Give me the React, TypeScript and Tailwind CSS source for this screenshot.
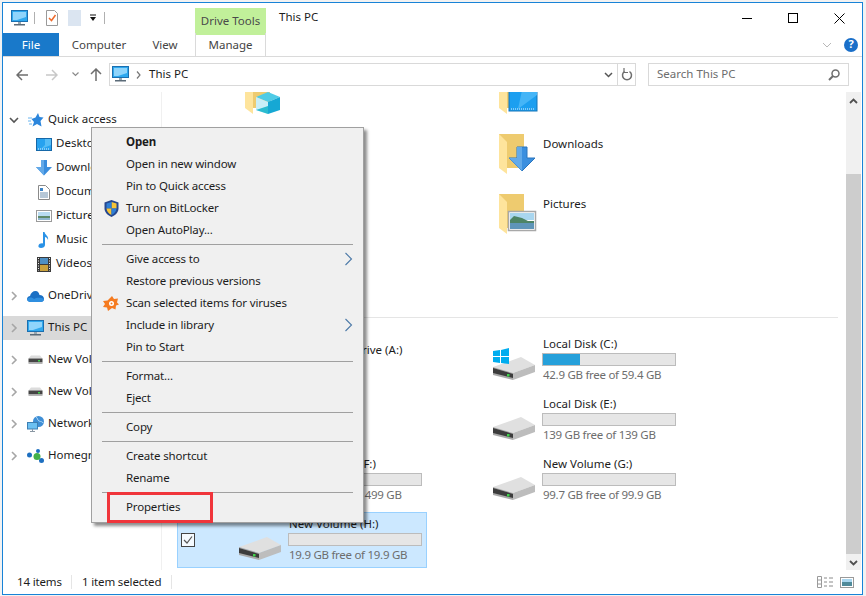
import type { ReactNode } from "react";

function Pc({ w = 17, h = 16 }: { w?: number; h?: number }) {
  return (
    <svg width={w} height={h} viewBox="0 0 17 16" className="shrink-0">
      <rect x="0.500" y="0.500" width="16" height="11" fill="#2fa8ee" stroke="#1b6fb0" />
      <polygon points="2,2 15,2 15,7 6,10 2,10" fill="#8fd4fb" />
      <rect x="7" y="12" width="3" height="2" fill="#9aa7b0" />
      <rect x="3" y="14" width="11" height="1.500" fill="#5b6b78" />
    </svg>
  );
}

function Chevron({ open = false }: { open?: boolean }) {
  return (
    <svg width="10" height="10" viewBox="0 0 10 10" className="shrink-0">
      {open ? (
        <path d="M1 3l4 4 4-4" fill="none" stroke="#555" strokeWidth="1.600" />
      ) : (
        <path d="M3 1l4 4-4 4" fill="none" stroke="#a6a6a6" strokeWidth="1.600" />
      )}
    </svg>
  );
}

function SmallDrive() {
  return (
    <svg width="15" height="10" viewBox="0 0 15 10" className="shrink-0">
      <polygon points="0.500,3.500 3,0.500 12,0.500 14.500,3.500" fill="#dcdcdc" />
      <rect x="0.500" y="3.500" width="14" height="4" fill="#454545" />
      <rect x="10" y="5" width="2" height="1.500" fill="#3fd24a" />
      <rect x="0.500" y="7.500" width="14" height="1.500" fill="#b5b5b5" />
    </svg>
  );
}

const navIcons: Record<string, ReactNode> = {
  star: (
    <svg width="16" height="16" viewBox="0 0 16 16">
      <polygon points="10,1 11.500,5 15.500,5.500 12.500,9 13.500,14.500 9,12 4.500,14.500 6,10 3.500,7 7.500,5.500" fill="#2c86dc" />
      <path d="M0 6h4M0 9h3M1 12h3" stroke="#69b4ef" strokeWidth="1" />
    </svg>
  ),
  desktop: (
    <svg width="16" height="13" viewBox="0 0 16 13">
      <rect x="0.500" y="0.500" width="15" height="12" fill="#27a2ef" stroke="#1668a8" />
      <polygon points="9,1 15,1 15,7 5,11 9,7" fill="#56bdf6" />
      <path d="M2 11h12" stroke="#e6f4ff" strokeDasharray="1 1" />
    </svg>
  ),
  down: (
    <svg width="16" height="16" viewBox="0 0 16 16">
      <polygon points="5,0 11,0 11,7 16,7 8,15.500 0,7 5,7" fill="#3a8ddd" />
      <polygon points="5,0 8,0 8,15.500 0,7 5,7" fill="#63a9e8" />
    </svg>
  ),
  doc: (
    <svg width="12" height="15" viewBox="0 0 12 15">
      <path d="M.5.500h7l4 4v10H.5z" fill="#fff" stroke="#8a8a8a" />
      <path d="M2 3h3v3H2z" fill="#3d84c6" />
      <path d="M2 8h8M2 10h8M2 12h8" stroke="#6d8fae" />
    </svg>
  ),
  pic: (
    <svg width="16" height="12" viewBox="0 0 16 12">
      <rect x="0.500" y="0.500" width="15" height="11" fill="#fff" stroke="#9a9a9a" />
      <rect x="2" y="2" width="12" height="4" fill="#b9dcf2" />
      <rect x="2" y="6" width="12" height="2" fill="#5f8a6a" />
      <rect x="2" y="8" width="12" height="2" fill="#8fb6cf" />
    </svg>
  ),
  music: (
    <svg width="12" height="16" viewBox="0 0 12 16">
      <path d="M5 0h1.500c.500 3 4.500 4 3.500 8-.500-2-2-3-3-3v8c0 2-2 3-4 3s-3-1-2.500-2.500S3 11 5 11.500z" fill="#2a92e6" />
    </svg>
  ),
  video: (
    <svg width="14" height="15" viewBox="0 0 14 15">
      <rect width="14" height="15" fill="#3a3a3a" />
      <rect x="3" y="1" width="8" height="6" fill="#4d8fc4" />
      <rect x="3" y="8" width="8" height="6" fill="#c9a13d" />
      <path d="M1.500 1v13M12.500 1v13" stroke="#eee" strokeDasharray="1 1.500" />
    </svg>
  ),
  cloud: (
    <svg width="17" height="11" viewBox="0 0 17 11">
      <path d="M4 11C1 11 0 9.500 0 8c0-2 2-3 3-3 .500-3 3-5 5.500-5S12 2 12.500 4c2.500 0 4.500 1.500 4.500 4 0 2-1.500 3-3.500 3z" fill="#1a6fc4" />
      <path d="M0 8c2-2 5-2 7 0 2-1.500 7-2 10 0 0 2-1.500 3-3.500 3H4C1 11 0 9.500 0 8z" fill="#2f8fe0" />
    </svg>
  ),
  pc: <Pc />,
  drive: <SmallDrive />,
  net: (
    <svg width="17" height="16" viewBox="0 0 17 16">
      <circle cx="11.500" cy="5.500" r="5.500" fill="#3f8fd6" />
      <path d="M9 1c2 1 1 3 3 4s3 0 4 2" stroke="#a8d4f4" fill="none" />
      <rect x="0.500" y="6.500" width="10" height="6.500" fill="#6cc0f2" stroke="#3d7fb3" />
      <path d="M5.500 13v2M3 15.500h5" stroke="#8a97a3" />
    </svg>
  ),
  home: (
    <svg width="17" height="14" viewBox="0 0 17 14">
      <circle cx="2.500" cy="6" r="2.500" fill="#1d6fc0" />
      <circle cx="11" cy="2" r="2" fill="#1d6fc0" />
      <circle cx="14.500" cy="11.500" r="2.500" fill="#1d6fc0" />
      <circle cx="10" cy="7.500" r="3.500" fill="#43b04a" />
    </svg>
  ),
};

function NavRow({ icon, label, expand, child, active, className = "" }: { icon: string; label: string; expand?: "open" | "closed"; child?: boolean; active?: boolean; className?: string }) {
  return (
    <div className={`flex h-[24px] items-center ${active ? "bg-[#d9d9d9]" : ""} ${className}`}>
      <div className="ml-[6px] w-[10px]">{expand && <Chevron open={expand === "open"} />}</div>
      <div className={`flex h-[16px] w-[17px] items-center justify-center ${child ? "ml-[16px]" : "ml-[8px]"}`}>{navIcons[icon]}</div>
      <span className="mb-[2px] ml-[4px] whitespace-nowrap">{label}</span>
    </div>
  );
}

function Folder({ children }: { children?: ReactNode }) {
  return (
    <svg width="40" height="42" viewBox="0 0 40 42" className="shrink-0">
      <rect x="1" y="1" width="25" height="34" fill="#eecb6f" />
      <polygon points="1,1 9,9 9,41 1,35" fill="#fee49c" />
      {children}
    </svg>
  );
}

const folderArt: Record<string, ReactNode> = {
  cube: (
    <g>
      <polygon points="12,24 24,19 36,24 24,29" fill="#4fcbe6" />
      <polygon points="12,24 24,29 24,41 12,37" fill="#c9eef7" />
      <polygon points="24,29 36,24 36,37 24,41" fill="#16a8d4" />
      <polygon points="12,37 24,33 24,41" fill="#2bbcd0" />
    </g>
  ),
  desktop: (
    <g>
      <rect x="11" y="8" width="28" height="30" fill="#1c9ff0" stroke="#1474b8" />
      <polygon points="26,8 39,8 39,22 20,36" fill="#45b5f7" />
      <path d="M13 36h24" stroke="#e8f6ff" strokeDasharray="1 1" />
    </g>
  ),
  down: (
    <g>
      <polygon points="19,14 29,14 29,25 37,25 24,38 11,25 19,25" fill="#3b8fdf" stroke="#2a75bd" />
      <polygon points="19,14 24,14 24,38 11,25 19,25" fill="#62aae9" />
    </g>
  ),
  pic: (
    <g>
      <rect x="10.500" y="18.500" width="27" height="19" fill="#fff" stroke="#a8a8a8" strokeWidth="1.500" />
      <rect x="12" y="20" width="24" height="7" fill="#a9d6ef" />
      <polygon points="12,27 16,23 24,25 30,28 36,28 36,30 12,31" fill="#4d8465" />
      <rect x="12" y="30" width="24" height="6" fill="#5f95b8" />
    </g>
  ),
};

function FolderTile({ name, art }: { name?: string; art?: string }) {
  return (
    <div className="flex h-[56px] border border-transparent pl-[66px]">
      <div className="mt-[6px] w-[45px]">{art && <Folder>{folderArt[art]}</Folder>}</div>
      {name && <div className="mt-[8px] whitespace-nowrap">{name}</div>}
    </div>
  );
}

function Drive({ win }: { win?: boolean }) {
  return (
    <svg width="44" height="32" viewBox="0 0 44 32" className="shrink-0">
      <polygon points="1,19 29,9 43,17 21,25" fill="#e0e0e0" />
      <polygon points="21,25 43,17 43,24 21,32" fill="#bdbdbd" />
      <polygon points="1,19 21,25 21,32 1,27" fill="#a8a8a8" />
      <polygon points="1,20 21,26 21,30 1,25" fill="#3c3c3c" />
      <rect x="15" y="26" width="2.500" height="2.500" fill="#3fd24a" />
      {win && (
        <g fill="#00adef">
          <polygon points="1,3 8,2 8,8 1,8" />
          <polygon points="9,2 17,0 17,8 9,8" />
          <polygon points="1,9 8,9 8,15 1,14" />
          <polygon points="9,9 17,9 17,16 9,15" />
        </g>
      )}
    </svg>
  );
}

function DriveTile({ name, free, used = 0, win, selected }: { name: string; free?: string; used?: number; win?: boolean; selected?: boolean }) {
  return (
    <div className={`relative flex h-[56px] border pl-[60px] ${selected ? "border-[#99d1ff] bg-[#cce8ff]" : "border-transparent"}`}>
      {selected && (
        <div className="absolute left-[3px] top-[20px] flex h-[14px] w-[14px] items-center justify-center border border-[#444] bg-[#f4faff]">
          <svg width="10" height="10" viewBox="0 0 10 10">
            <path d="M1 5l3 3 5-6.500" fill="none" stroke="#555" strokeWidth="1.200" />
          </svg>
        </div>
      )}
      <div className="mt-[15px] w-[51px]">
        <Drive win={win} />
      </div>
      {free ? (
        <div className="w-[134px]">
          <div className="mt-[3px] h-[16px] whitespace-nowrap leading-[16px]">{name}</div>
          <div className="-ml-[1px] mr-[1px] mt-[1px] h-[13px] border border-[#bcbcbc] bg-[#e6e6e6]">
            <div className="h-full bg-[#26a0da]" style={{ width: `${used}%` }} />
          </div>
          <div className="whitespace-nowrap leading-[18px] tracking-[-0.28px] text-[#6d6d6d]">{free}</div>
        </div>
      ) : (
        <div className="mt-[8px] whitespace-nowrap">{name}</div>
      )}
    </div>
  );
}

function MenuItem({ label, bold, arrow, icon }: { label: string; bold?: boolean; arrow?: boolean; icon?: ReactNode }) {
  return (
    <div className="flex h-[22px] items-center">
      <div className="flex w-[34px] justify-end pr-[7px]">{icon}</div>
      <span className={`whitespace-nowrap ${bold ? "font-bold" : ""}`}>{label}</span>
      {arrow && (
        <svg width="9" height="14" viewBox="0 0 9 14" className="ml-auto mr-[10px]">
          <path d="M1.500 1l6 6-6 6" fill="none" stroke="#4d7aa8" strokeWidth="1.100" />
        </svg>
      )}
    </div>
  );
}

function MenuSep() {
  return <div className="mx-[10px] my-[3px] h-px bg-[#a0a0a0]" />;
}

function ContextMenu() {
  return (
    <div className="absolute left-[91px] top-[127px] h-[396px] w-[273px] border border-[#a0a0a0] bg-[#f0f0f0] py-[3px] tracking-[-0.16px] shadow-[3px_3px_3px_rgba(0,0,0,0.45)]">
      <MenuItem label="Open" bold />
      <MenuItem label="Open in new window" />
      <MenuItem label="Pin to Quick access" />
      <MenuItem
        label="Turn on BitLocker"
        icon={
          <svg width="15" height="17" viewBox="0 0 15 17">
            <path d="M7.500 0l7 2.500v6c0 4-3.500 7-7 8.500C4 15.500.5 12.500.5 8.500v-6z" fill="#27488f" />
            <path d="M7.500 2l5 1.500v5h-5z" fill="#f7c436" />
            <path d="M7.500 2v6.500h-5v-5z" fill="#2f7fd6" />
            <path d="M2.500 8.500h5V15C5 14 2.800 11.500 2.500 8.500z" fill="#f7c436" />
            <path d="M7.500 8.500h5c-.3 3-2.500 5.500-5 6.500z" fill="#2f7fd6" />
          </svg>
        }
      />
      <MenuItem label="Open AutoPlay..." />
      <MenuSep />
      <MenuItem label="Give access to" arrow />
      <MenuItem label="Restore previous versions" />
      <MenuItem
        label="Scan selected items for viruses"
        icon={
          <svg width="16" height="15" viewBox="0 0 16 15">
            <path d="M9 0l2 3 4-.5-1 4 2 2-3 1-.5 4-3.500-1.500L5 15l-1-3.500L0 11l2-3-2-3 4.500-.5z" fill="#f57b20" />
            <circle cx="8.500" cy="7.500" r="2.500" fill="#fff" />
            <circle cx="8.500" cy="7.500" r="1" fill="#f57b20" />
          </svg>
        }
      />
      <MenuItem label="Include in library" arrow />
      <MenuItem label="Pin to Start" />
      <MenuSep />
      <MenuItem label="Format..." />
      <MenuItem label="Eject" />
      <MenuSep />
      <MenuItem label="Copy" />
      <MenuSep />
      <MenuItem label="Create shortcut" />
      <MenuItem label="Rename" />
      <MenuSep />
      <MenuItem label="Properties" />
      {/* red highlight round Properties */}
      <div className="absolute left-[15px] top-[364px] h-[31px] w-[106px] border-[3px] border-[#f0353b]" />
    </div>
  );
}

export default function App() {
  return (
    <div className="relative h-[596px] w-[866px] overflow-hidden bg-[#f2f2f2] pl-[2px] pt-[2px] font-['Noto_Sans',sans-serif] text-[11.5px] text-[#1c1c1c]">
      <div className="flex h-[593px] w-[861px] flex-col border border-[#1883d7] bg-white">
        {/* title bar */}
        <div className="flex h-[30px] shrink-0 items-center">
          <div className="ml-[8px]"><Pc /></div>
          <div className="ml-[6px] h-[12px] w-px bg-[#b0b0b0]" />
          <svg width="12" height="16" viewBox="0 0 12 16" className="ml-[11px]">
            <path d="M.5.500h8l3 3v12H.5z" fill="#fff" stroke="#9a9a9a" />
            <path d="M3 8l2.500 2.500L9.500 5" fill="none" stroke="#ee6a2b" strokeWidth="1.500" />
          </svg>
          <div className="ml-[10px] h-[16px] w-[13px] bg-[#dbe5f1]" />
          <svg width="8" height="8" viewBox="0 0 8 8" className="ml-[8px]">
            <path d="M1 1h6" stroke="#111" />
            <path d="M1 3h6L4 7z" fill="#111" />
          </svg>
          <div className="ml-[7px] h-[12px] w-px bg-[#b0b0b0]" />
          <div className="ml-[90px] mt-[6px] flex h-[27px] w-[71px] items-center justify-center bg-[#c1f09a] text-[#4a4a4a]">Drive Tools</div>
          <div className="mb-[2px] ml-[13px]">This PC</div>
          <div className="ml-auto flex">
            <div className="flex h-[30px] w-[46px] items-center justify-center">
              <div className="h-px w-[10px] bg-black" />
            </div>
            <div className="flex h-[30px] w-[46px] items-center justify-center">
              <div className="h-[10px] w-[10px] border border-black" />
            </div>
            <div className="flex h-[30px] w-[46px] items-center justify-center">
              <svg width="11" height="11" viewBox="0 0 11 11">
                <path d="M.5.500l10 10M10.500.500l-10 10" stroke="#000" />
              </svg>
            </div>
          </div>
        </div>

        {/* ribbon tabs */}
        <div className="flex h-[24px] shrink-0 items-stretch border-b border-[#dadada] text-[#444]">
          <div className="flex w-[56px] items-center justify-center bg-[#1979ca] text-white">File</div>
          <div className="flex w-[80px] items-center justify-center">Computer</div>
          <div className="flex w-[52px] items-center justify-center">View</div>
          <div className="ml-[4px] flex w-[71px] items-center justify-center border-x border-[#dadada]">Manage</div>
          <div className="ml-auto flex items-center">
            <svg width="10" height="6" viewBox="0 0 10 6">
              <path d="M1 1l4 4 4-4" fill="none" stroke="#b8b8b8" />
            </svg>
            <div className="ml-[12px] mr-[4px] flex h-[14px] w-[14px] items-center justify-center rounded-full bg-[#1a6fc9] text-[11px] font-bold text-white">?</div>
          </div>
        </div>

        {/* address bar */}
        <div className="flex h-[35px] shrink-0 items-center">
          <svg width="12" height="12" viewBox="0 0 12 12" className="ml-[13px]">
            <path d="M6 1L1 6l5 5M1 6h11" fill="none" stroke="#6e6e6e" strokeWidth="1.500" />
          </svg>
          <svg width="12" height="12" viewBox="0 0 12 12" className="ml-[18px]">
            <path d="M6 1l5 5-5 5M11 6H0" fill="none" stroke="#c8c8c8" strokeWidth="1.500" />
          </svg>
          <svg width="7" height="5" viewBox="0 0 7 5" className="ml-[14px]">
            <path d="M.5.500l3 3 3-3" fill="none" stroke="#8a8a8a" strokeWidth="1.200" />
          </svg>
          <svg width="12" height="13" viewBox="0 0 12 13" className="ml-[11px]">
            <path d="M1 6l5-5 5 5M6 1v12" fill="none" stroke="#6e6e6e" strokeWidth="1.500" />
          </svg>
          <div className="ml-[7px] flex h-[23px] w-[527px] items-center border border-[#d9d9d9]">
            <div className="mb-[1px] ml-[2px]"><Pc /></div>
            <svg width="5" height="8" viewBox="0 0 5 8" className="ml-[7px]">
              <path d="M1 .500l3 3.500-3 3.500" fill="none" stroke="#777" strokeWidth="1.200" />
            </svg>
            <span className="mb-[2px] ml-[8px]">This PC</span>
            <svg width="9" height="6" viewBox="0 0 9 6" className="ml-auto">
              <path d="M1 1l3.500 3.500L8 1" fill="none" stroke="#555" strokeWidth="1.500" />
            </svg>
            <div className="ml-[4px] h-full w-px bg-[#d9d9d9]" />
            <svg width="12" height="13" viewBox="0 0 12 13" className="ml-[3px] mr-[2px]">
              <path d="M3.500 3.500a4.500 4.500 0 1 0 5 0" fill="none" stroke="#6e6e6e" strokeWidth="1.500" />
              <path d="M3 0v4.500h4" fill="none" stroke="#6e6e6e" strokeWidth="1.200" />
            </svg>
          </div>
          <div className="ml-[12px] flex h-[23px] w-[201px] items-center border border-[#d9d9d9] pl-[8px] pr-[8px] text-[#6d6d6d]">
            <span className="mb-[2px]">Search This PC</span>
            <svg width="12" height="12" viewBox="0 0 12 12" className="ml-auto">
              <circle cx="7.500" cy="4.500" r="3.500" fill="none" stroke="#6e6e6e" strokeWidth="1.500" />
              <path d="M5 7l-4 4" stroke="#6e6e6e" strokeWidth="2" />
            </svg>
          </div>
        </div>

        {/* main area */}
        <div className="flex h-[478px] shrink-0">
          <div className="w-[159px] shrink-0 overflow-hidden border-r border-[#f0f0f0] pt-[16px]">
            <NavRow icon="star" label="Quick access" expand="open" />
            <NavRow icon="desktop" label="Desktop" child />
            <NavRow icon="down" label="Downloads" child />
            <NavRow icon="doc" label="Documents" child />
            <NavRow icon="pic" label="Pictures" child />
            <NavRow icon="music" label="Music" child />
            <NavRow icon="video" label="Videos" child />
            <NavRow icon="cloud" label="OneDrive" expand="closed" className="mt-[8px]" />
            <NavRow icon="pc" label="This PC" expand="closed" active className="mt-[8px]" />
            <NavRow icon="drive" label="New Volume (D:)" expand="closed" className="mt-[8px]" />
            <NavRow icon="drive" label="New Volume (E:)" expand="closed" className="mt-[8px]" />
            <NavRow icon="net" label="Network" expand="closed" className="mt-[8px]" />
            <NavRow icon="home" label="Homegroup" expand="closed" className="mt-[8px]" />
          </div>

          <div className="min-w-0 flex-1 overflow-hidden">
            {/* content is scrolled, so the first row starts above the pane */}
            <div className="-mt-[26px] grid grid-cols-[250px_250px] gap-[4px] pl-[15px]">
              <FolderTile art="cube" />
              <FolderTile art="desktop" />
              <FolderTile />
              <FolderTile name="Downloads" art="down" />
              <FolderTile />
              <FolderTile name="Pictures" art="pic" />
              <FolderTile />
              <div />
              <div className="col-span-2 flex h-[22px] w-[661px] items-center">
                <div className="h-px flex-1 bg-[#e5e5e5]" />
              </div>
              <DriveTile name="Floppy Disk Drive (A:)" />
              <DriveTile name="Local Disk (C:)" free="42.9 GB free of 59.4 GB" used={28} win />
              <div />
              <DriveTile name="Local Disk (E:)" free="139 GB free of 139 GB" />
              <DriveTile name="New Volume (F:)" free="499 GB free of 499 GB" />
              <DriveTile name="New Volume (G:)" free="99.7 GB free of 99.9 GB" />
              <DriveTile name="New Volume (H:)" free="19.9 GB free of 19.9 GB" selected />
            </div>
          </div>

          {/* scrollbar */}
          <div className="mr-[1px] flex w-[15px] shrink-0 flex-col bg-[#f0f0f0]">
            <div className="flex h-[82px] justify-center pt-[6px]">
              <svg width="9" height="6" viewBox="0 0 9 6">
                <path d="M1 5l3.500-3.500L8 5" fill="none" stroke="#505050" strokeWidth="1.800" />
              </svg>
            </div>
            <div className="flex-1 bg-[#cdcdcd]" />
            <div className="flex h-[16px] justify-center pt-[6px]">
              <svg width="9" height="6" viewBox="0 0 9 6">
                <path d="M1 1l3.500 3.500L8 1" fill="none" stroke="#505050" strokeWidth="1.800" />
              </svg>
            </div>
          </div>
        </div>

        {/* status bar */}
        <div className="flex h-[24px] shrink-0 items-center pl-[14px] tracking-[-0.15px]">
          <span className="w-[54px] whitespace-nowrap">14 items</span>
          <div className="h-[14px] w-px bg-[#e5e5e5]" />
          <span className="ml-[10px] w-[89px] whitespace-nowrap">1 item selected</span>
          <div className="h-[14px] w-px bg-[#e5e5e5]" />
          <svg width="16" height="12" viewBox="0 0 16 12" className="ml-auto">
            <path d="M.5.500h4v11h-4zM.5 4h4M.5 8h4" fill="#fff" stroke="#9a9a9a" />
            <path d="M7 2h3M12 2h4M7 6h3M12 6h4M7 10h3M12 10h4" stroke="#8a8a8a" />
          </svg>
          <svg width="14" height="11" viewBox="0 0 14 11" className="ml-[7px] mr-[8px]">
            <rect x="0.500" y="0.500" width="13" height="10" fill="#fff" stroke="#9a9a9a" />
            <rect x="2" y="2" width="10" height="3" fill="#a9d6ef" />
            <rect x="2" y="5" width="10" height="4" fill="#4f8a9a" />
          </svg>
        </div>
      </div>

      <ContextMenu />
    </div>
  );
}
